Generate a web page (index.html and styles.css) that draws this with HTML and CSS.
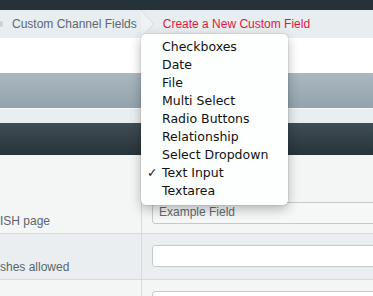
FILE: index.html
```html
<!DOCTYPE html>
<html lang="en">
  <head>
    <meta charset="UTF-8" />
    <title>Create a New Custom Field</title>
    <link rel="stylesheet" href="styles.css">
  </head>
  <body>
    <div class="topbar"></div>

    <nav class="crumbs">
      <span class="crumb-cap"></span>
      <a href="#" class="crumb">Custom Channel Fields</a>
      <svg class="crumb-sep" width="16" height="28" viewBox="0 0 16 28">
        <path d="M0 0 L13 14 L0 28" fill="#eef2f4" stroke="#d3dade" stroke-width="1" />
      </svg>
      <span class="crumb current">Create a New Custom Field</span>
    </nav>

    <div class="spacer"></div>
    <div class="panel-head"></div>
    <div class="strip"></div>
    <div class="table-head"></div>

    <div class="rows">
      <div class="row tall">
        <div class="label">ISH page</div>
        <div class="field"><input type="text" class="filled" value="Example Field" /></div>
      </div>
      <div class="row alt">
        <div class="label">shes allowed</div>
        <div class="field"><input type="text" /></div>
      </div>
      <div class="row">
        <div class="label"></div>
        <div class="field"><input type="text" /></div>
      </div>
    </div>

    <ul class="menu">
      <li>Checkboxes</li>
      <li>Date</li>
      <li>File</li>
      <li>Multi Select</li>
      <li>Radio Buttons</li>
      <li>Relationship</li>
      <li>Select Dropdown</li>
      <li class="checked">Text Input</li>
      <li>Textarea</li>
    </ul>
  </body>
</html>
```

FILE: styles.css
```css
body {
  margin: 0;
  font-family: "Liberation Sans", Arial, sans-serif;
  background-color: #f4f5f5;
  overflow: hidden;
  height: 296px;
}

.topbar {
  height: 10px;
  background-color: #25323a;
}

.crumbs {
  display: flex;
  align-items: center;
  height: 28px;
  background-color: #e8edf0;
  font-size: 12px;
}

.crumb-cap {
  width: 3px;
  height: 6px;
  border-radius: 0 3px 3px 0;
  background-color: #c9d1d6;
  margin-right: 9px;
}

.crumb {
  color: #5d6970;
  text-decoration: none;
}

.crumb-sep {
  flex: none;
  margin: 0 6px 0 4px;
  align-self: stretch;
}

.current {
  color: #e3173e;
}

.spacer {
  height: 35px;
  background-color: white;
}

.panel-head {
  height: 35px;
  background: linear-gradient(#aab8c0, #93a3ac);
}

.strip {
  height: 15px;
  background-color: #e9eef1;
  border-top: 1px solid #f6f8f9;
  box-sizing: border-box;
}

.table-head {
  height: 32px;
  background: linear-gradient(#3f4d55, #27333a);
}

.row {
  display: flex;
  height: 45px;
  border-bottom: 1px solid #d3dbe0;
  background-color: #f4f5f5;
}

.row.tall {
  height: 78px;
}

.row.alt {
  background-color: #eaeef0;
}

.label {
  flex: none;
  width: 142px;
  border-right: 1px solid #d3dbe0;
  display: flex;
  align-items: flex-end;
  padding-bottom: 5px;
  box-sizing: border-box;
  color: #5a666d;
  font-size: 12px;
  white-space: nowrap;
}

.field {
  flex: 1;
  padding: 11px 0 0 10px;
}

.row.tall .field {
  padding-top: 47px;
}

.field input {
  display: block;
  width: 260px;
  height: 22px;
  box-sizing: border-box;
  border: 1px solid #c4cbcf;
  border-radius: 3px;
  background-color: white;
  font-family: "Liberation Sans", Arial, sans-serif;
  font-size: 12px;
  color: #5f6a70;
  padding: 0 6px 2px;
}

.field input.filled {
  background-color: #f6f7f7;
}

.menu {
  position: absolute;
  left: 141px;
  top: 34px;
  width: 147px;
  margin: 0;
  padding: 4px 0 5px;
  list-style: none;
  background-color: #fdfefe;
  border-radius: 5px;
  box-shadow: 0 4px 12px rgba(0, 0, 0, 0.28), 0 0 0 1px rgba(0, 0, 0, 0.06);
  font-family: "DejaVu Sans", sans-serif;
  font-size: 12.5px;
  color: #111;
}

.menu li {
  height: 18px;
  line-height: 18px;
  padding-left: 21px;
  position: relative;
}

.menu li.checked::before {
  content: "\2713";
  position: absolute;
  left: 6px;
}
```
